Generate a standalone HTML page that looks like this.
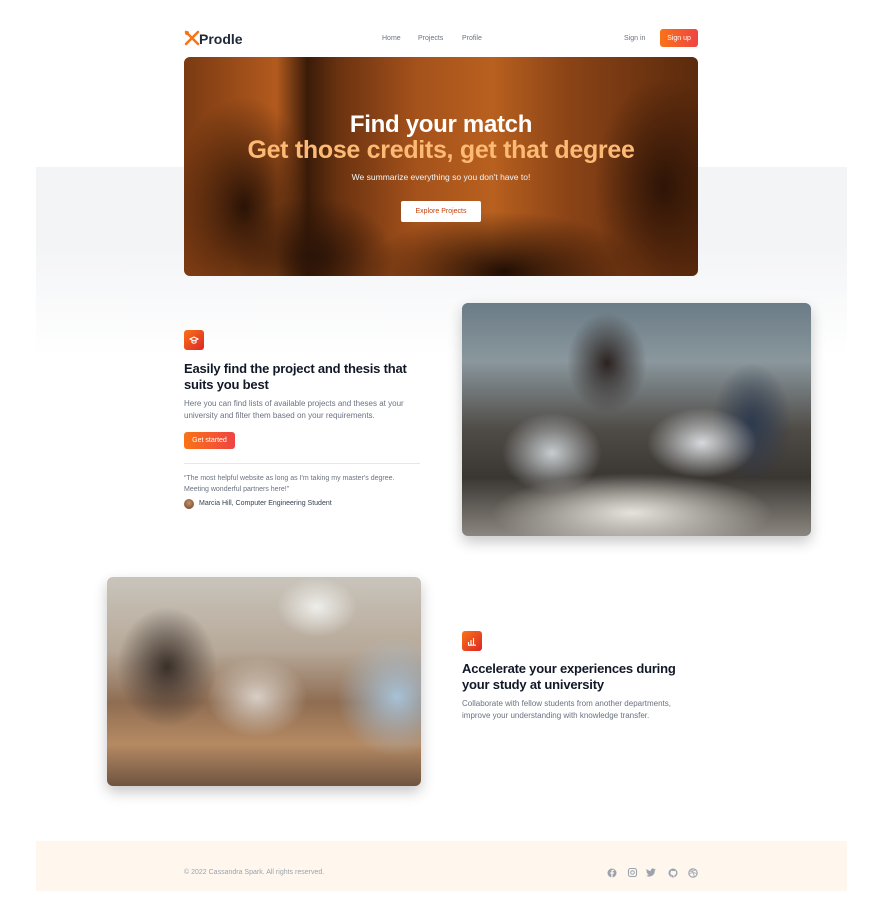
<!DOCTYPE html>
<html><head><meta charset="utf-8"><style>
*{margin:0;padding:0;box-sizing:border-box}
body{width:877px;height:898px;background:#fff;font-family:"Liberation Sans",Arial,sans-serif;position:relative;overflow:hidden;color:#111827}
.abs{position:absolute}
.band{left:36px;top:167px;width:811px;height:190px;background:linear-gradient(#f3f4f6 0%,#f3f4f6 40%,#fff 100%)}
.nav a{position:absolute;font-size:7px;color:#6b7280;top:35px}
.btn{background:linear-gradient(90deg,#f97316,#ef4444);color:#fff;border-radius:3px;font-size:7px;display:flex;align-items:center;justify-content:center}
.hero{left:184px;top:57px;width:514px;height:219px;border-radius:6px;overflow:hidden;
background:
radial-gradient(ellipse 70px 110px at 60px 150px,#2a1306 0%,transparent 100%),
radial-gradient(ellipse 70px 110px at 480px 130px,#2e1406 0%,transparent 100%),
radial-gradient(ellipse 140px 60px at 320px 215px,#1f0d04 0%,transparent 100%),
radial-gradient(ellipse 80px 60px at 130px 200px,#2b1407 0%,transparent 100%),
linear-gradient(90deg,#7a3a12 0%,#b35a1e 18%,#3a1b08 24%,#6a3210 30%,#a4511b 45%,#b8601f 60%,#8a4316 75%,#5b2a0d 100%)}
.icon{width:20px;height:20px;border-radius:3px;background:linear-gradient(135deg,#f97316,#dc2626);display:flex;align-items:center;justify-content:center}
h2{font-size:13px;line-height:16px;font-weight:700;color:#111827;letter-spacing:-0.2px}
p.d{font-size:8px;line-height:12px;color:#6b7280}
.img{border-radius:6px;box-shadow:0 6px 14px rgba(0,0,0,.22);overflow:hidden}
</style></head><body>
<div class="abs band"></div>
<div class="abs" style="left:184px;top:30px;"><svg width="16" height="16" viewBox="0 0 16 16"><path d="M2 2l12 12M14 2L2 14" stroke="#f97316" stroke-width="2.5" stroke-linecap="round"/><circle cx="3" cy="3" r="2" fill="#f97316"/></svg></div>
<div class="abs" style="left:199px;top:31px;font-size:14px;font-weight:700;color:#1f2937">Prodle</div>
<div class="nav"><a style="left:382px">Home</a><a style="left:418px">Projects</a><a style="left:462px">Profile</a><a style="left:624px">Sign in</a></div>
<div class="abs btn" style="left:660px;top:29px;width:38px;height:18px">Sign up</div>
<div class="abs hero"></div>
<div class="abs" style="left:184px;top:111px;width:514px;text-align:center;font-size:24px;font-weight:700;color:#fff;letter-spacing:-0.3px">Find your match</div>
<div class="abs" style="left:184px;top:136px;width:514px;text-align:center;font-size:25px;font-weight:700;color:#fdba74;letter-spacing:-0.3px">Get those credits, get that degree</div>
<div class="abs" style="left:184px;top:172px;width:514px;text-align:center;font-size:8.5px;color:#f3f4f6">We summarize everything so you don't have to!</div>
<div class="abs" style="left:401px;top:201px;width:80px;height:21px;background:#fff;border-radius:2px;font-size:7px;color:#c2410c;display:flex;align-items:center;justify-content:center">Explore Projects</div>
<div class="abs icon" style="left:184px;top:330px"><svg width="10" height="10" viewBox="0 0 10 10"><path d="M1 4l4-2 4 2-4 2z M3 5v2.5c1 1 3 1 4 0V5" fill="none" stroke="#fff" stroke-width="1.1"/></svg></div>
<h2 class="abs" style="left:184px;top:361px;width:230px">Easily find the project and thesis that suits you best</h2>
<p class="abs d" style="left:184px;top:398px;width:232px">Here you can find lists of available projects and theses at your university and filter them based on your requirements.</p>
<div class="abs btn" style="left:184px;top:432px;width:51px;height:17px">Get started</div>
<div class="abs" style="left:184px;top:463px;width:236px;height:1px;background:#e5e7eb"></div>
<p class="abs" style="left:184px;top:474px;width:228px;font-size:7px;line-height:10.5px;color:#6b7280">“The most helpful website as long as I'm taking my master's degree. Meeting wonderful partners here!”</p>
<div class="abs" style="left:184px;top:499px;width:10px;height:10px;border-radius:50%;background:radial-gradient(circle at 50% 40%,#c8906a,#6b3f25)"></div>
<div class="abs" style="left:199px;top:500px;font-size:7px;color:#374151">Marcia Hill, Computer Engineering Student</div>
<div class="abs img" style="left:462px;top:303px;width:349px;height:233px;background:
radial-gradient(ellipse 40px 50px at 145px 60px,#2b2220,transparent),
radial-gradient(ellipse 50px 40px at 90px 150px,#c7ccd0,transparent),
radial-gradient(ellipse 55px 35px at 240px 140px,#d6dadd,transparent),
radial-gradient(ellipse 140px 40px at 170px 210px,#e6e3dc,transparent),
radial-gradient(ellipse 40px 60px at 290px 120px,#2d3a4f,transparent),
linear-gradient(180deg,#6b7c86 0%,#8a979d 25%,#4e4a45 55%,#3a3632 75%,#8b8780 100%)"></div>
<div class="abs img" style="left:107px;top:577px;width:314px;height:209px;background:
radial-gradient(ellipse 50px 60px at 60px 90px,#3a2f2a,transparent),
radial-gradient(ellipse 60px 60px at 290px 120px,#a7c1d6,transparent),
radial-gradient(ellipse 50px 40px at 150px 120px,#d8cfc6,transparent),
radial-gradient(ellipse 40px 30px at 210px 30px,#eeeeea,transparent),
linear-gradient(180deg,#c9c4bb 0%,#b7a999 35%,#8f6d52 60%,#b58a63 80%,#6f5440 100%)"></div>
<div class="abs icon" style="left:462px;top:631px"><svg width="10" height="10" viewBox="0 0 10 10"><path d="M1.5 9V6M4 9V4M6.5 9V2M1 9.2h8" fill="none" stroke="#fff" stroke-width="1.1"/></svg></div>
<h2 class="abs" style="left:462px;top:661px;width:230px">Accelerate your experiences during your study at university</h2>
<p class="abs d" style="left:462px;top:698px;width:222px">Collaborate with fellow students from another departments, improve your understanding with knowledge transfer.</p>
<div class="abs" style="left:36px;top:841px;width:811px;height:50px;background:#fff7ed"></div>
<div class="abs" style="left:184px;top:869px;font-size:7px;color:#9ca3af">© 2022 Cassandra Spark. All rights reserved.</div>
<svg class="abs" style="left:607px;top:867px" width="95" height="12" viewBox="0 0 95 12" fill="#9ca3af">
<circle cx="5" cy="6" r="4.5"/><path d="M5.6 10.5V6.7h1.2l.2-1.3H5.6v-.8c0-.4.1-.6.6-.6H7V2.8H6c-1.2 0-1.7.7-1.7 1.7v.9H3.3v1.3h1v3.8z" fill="#fff7ed"/>
<rect x="21.5" y="1.5" width="8" height="8" rx="2" fill="none" stroke="#9ca3af" stroke-width="1.1"/><circle cx="25.5" cy="5.5" r="1.8" fill="none" stroke="#9ca3af" stroke-width="1"/>
<path d="M49 2.5c-.4.2-.8.3-1.2.3.4-.3.7-.6.9-1.1-.4.2-.9.4-1.3.5a2 2 0 0 0-3.5 1.8c-1.7-.1-3.2-.9-4.2-2.1-.6 1-.3 2.2.6 2.7-.3 0-.6-.1-.9-.2 0 1 .7 1.8 1.6 2-.3.1-.6.1-.9 0 .3.8 1 1.4 1.9 1.4A4 4 0 0 1 39 8.6 5.7 5.7 0 0 0 47.8 3.5c.5-.3.9-.6 1.2-1z"/>
<circle cx="66" cy="6" r="4.5"/><path d="M64.5 10.3v-1.5c-1.2.3-1.5-.5-1.5-.5M67.5 10.3V8.8c0-.6-.3-.8-.3-.8 1.2-.1 2-.6 2-2.1 0-.5-.2-.9-.5-1.2.1-.3.1-.7-.1-1.1 0 0-.4-.1-1.2.4a4 4 0 0 0-2.2 0c-.8-.5-1.2-.4-1.2-.4-.2.4-.2.8-.1 1.1-.3.3-.5.7-.5 1.2 0 1.5.8 2 2 2.1" fill="#fff7ed"/>
<circle cx="86" cy="6" r="4.2" fill="none" stroke="#9ca3af" stroke-width="1.1"/><path d="M82.5 4c2 .5 4.5.2 6.5-1.3M84 1.8c1.5 2 2.8 4.8 3.3 8M82 6.8c2-1.2 4.5-1.4 7.8-.4" fill="none" stroke="#9ca3af" stroke-width=".8"/>
</svg>
</body></html>
